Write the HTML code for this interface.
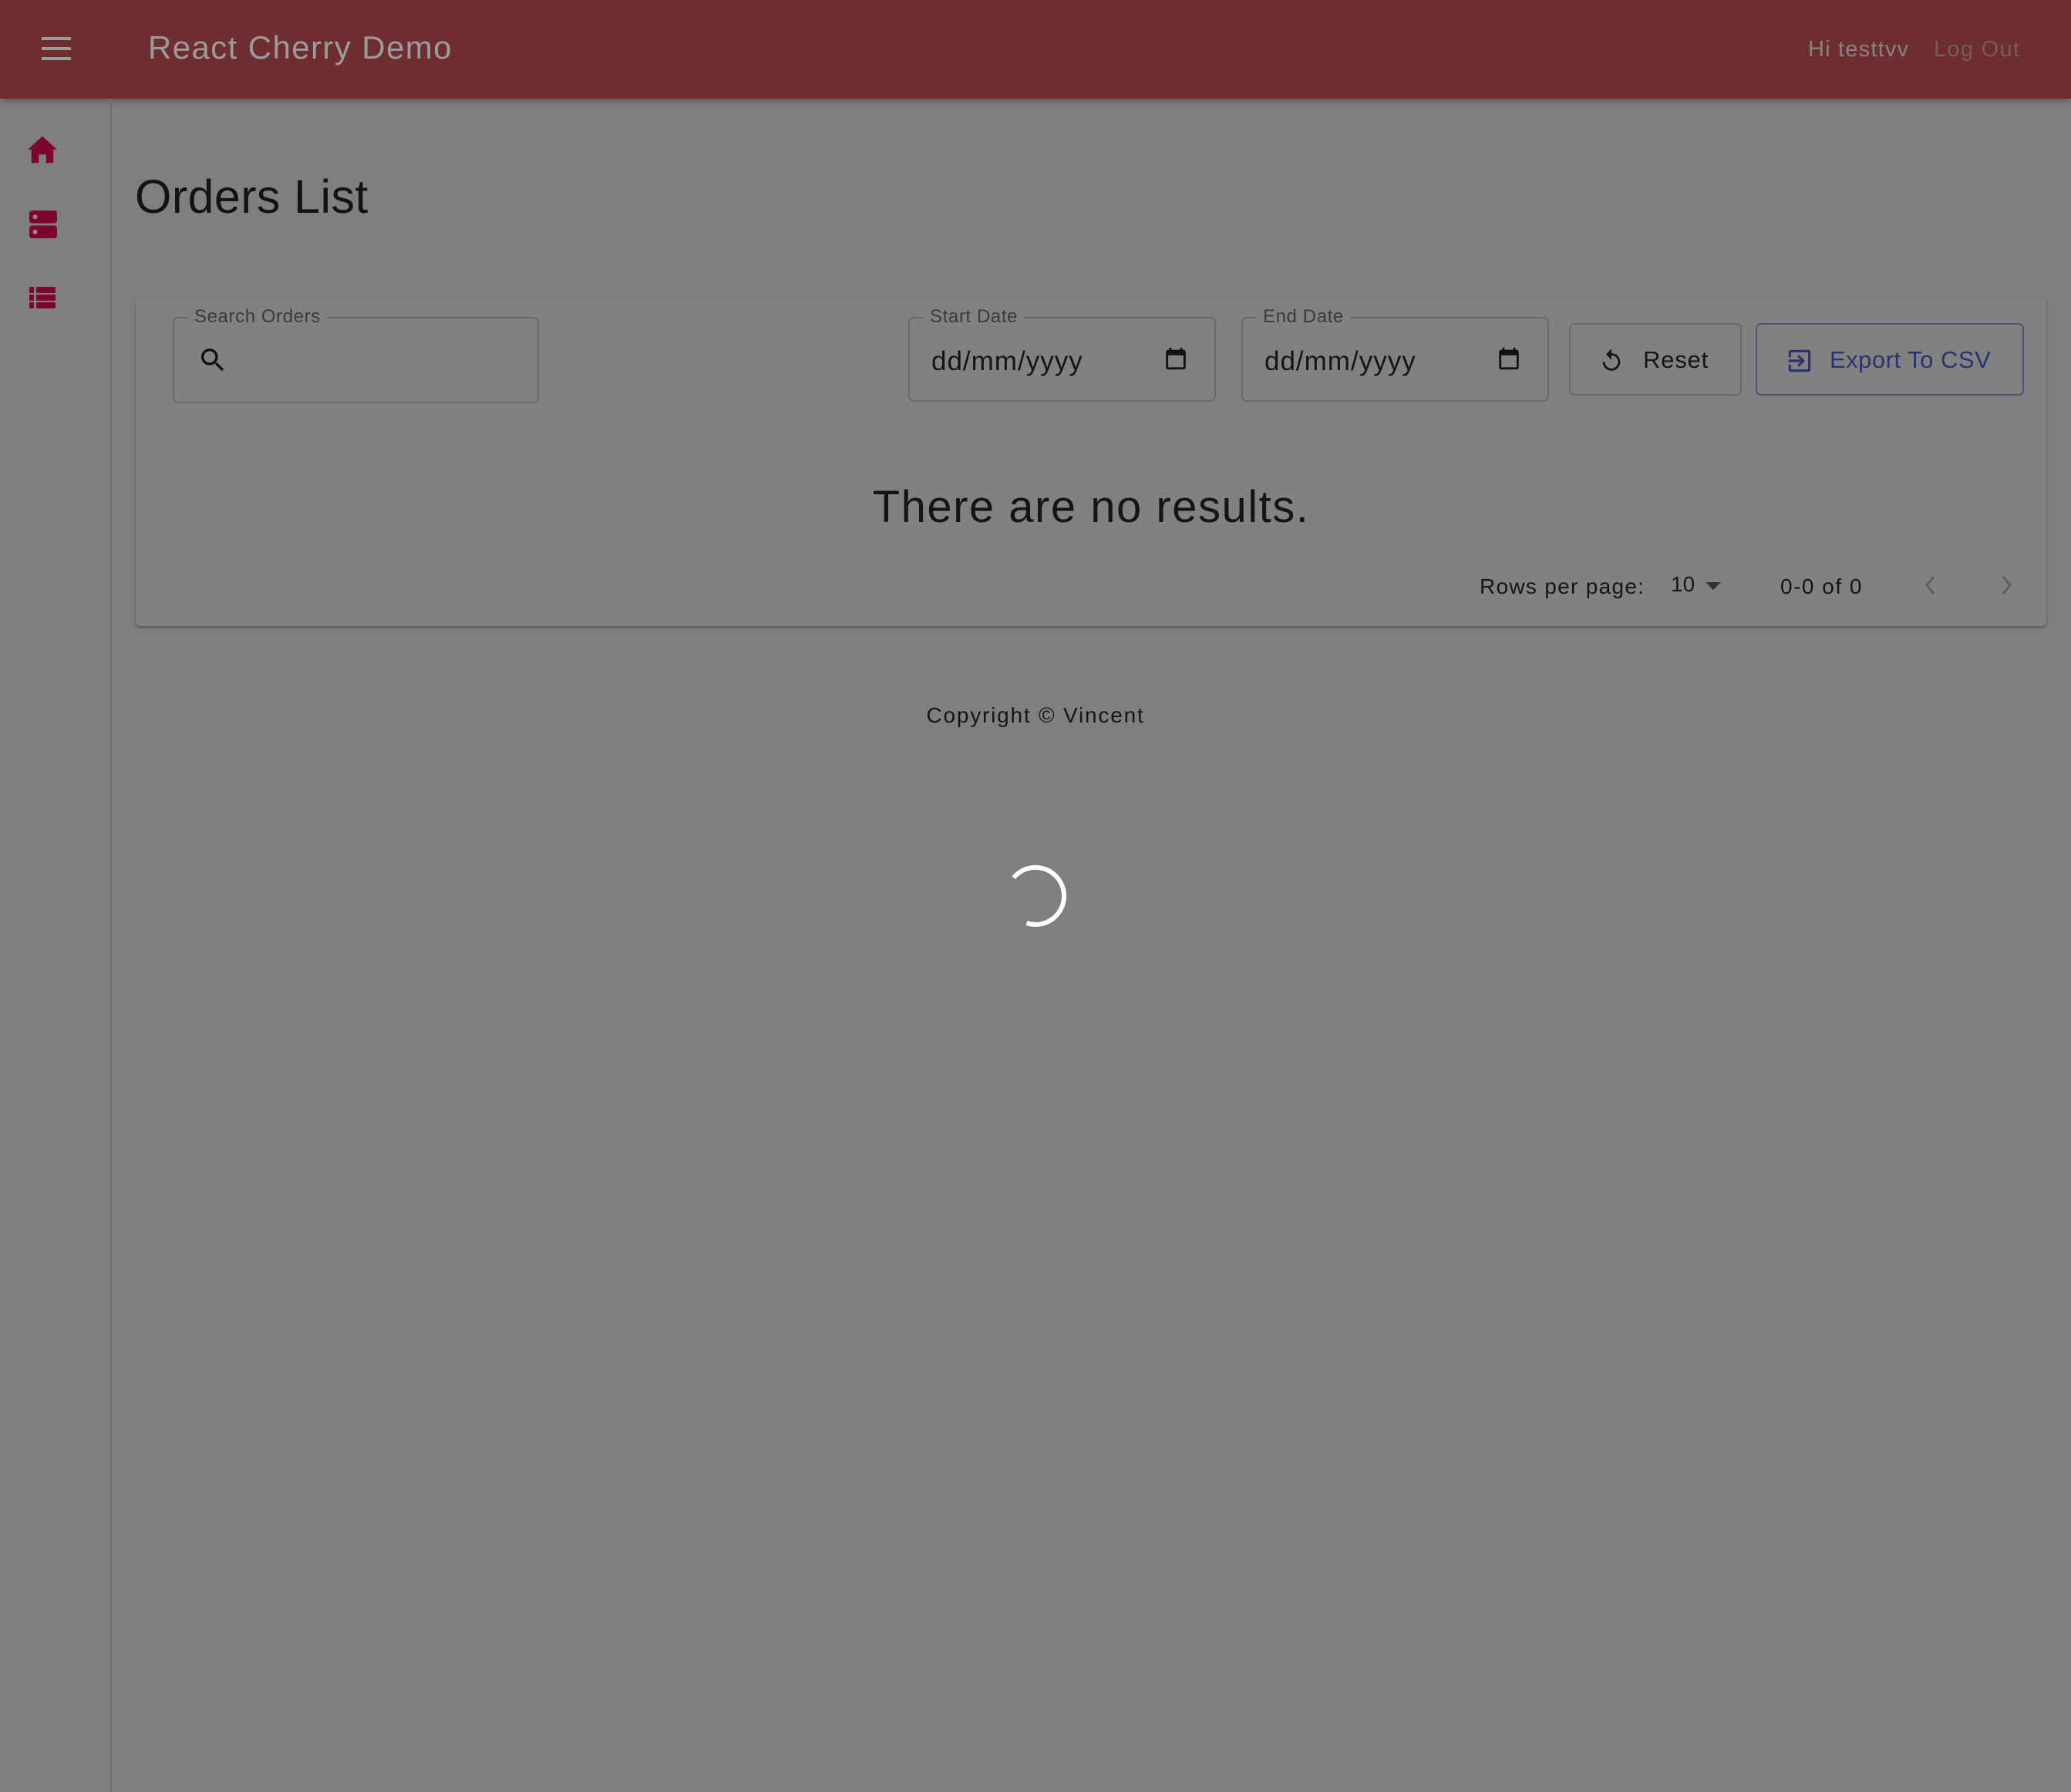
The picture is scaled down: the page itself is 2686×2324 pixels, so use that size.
<!DOCTYPE html>
<html><head><meta charset="utf-8"><style>
*{box-sizing:border-box;margin:0;padding:0}
body{width:2686px;height:2324px;background:#7f7f7f;font-family:"Liberation Sans",sans-serif;position:relative;overflow:hidden}
.abs{position:absolute}
.hdr{left:0;top:0;width:2686px;height:128px;background:#6e2e2f;box-shadow:0 4px 8px rgba(0,0,0,.25)}
.side{left:0;top:128px;width:145px;height:2196px;border-right:2px solid #707070}
.card{left:176px;top:386px;width:2478px;height:426px;background:#818181;border-radius:6px;box-shadow:0 2px 3px rgba(0,0,0,.3)}
.fld{border:2px solid #6a6a6a;border-radius:7px}
.lbl{font-size:24px;color:#3a3a3a;background:#818181;padding:0 8px;top:-16px;left:18px;position:absolute;letter-spacing:.6px}
.dt{font-size:35px;color:#151515;position:absolute;left:28px;top:36px;letter-spacing:1px}
.btn{border:2px solid #6a6a6a;border-radius:7px}
</style></head><body>
<div class="abs hdr"></div>
<svg class="abs" style="left:54px;top:48px" width="38" height="30"><rect y="0" width="38" height="4" fill="#9b9b9b"/><rect y="13" width="38" height="4" fill="#9b9b9b"/><rect y="26" width="38" height="4" fill="#9b9b9b"/></svg>
<div class="abs" style="left:192px;top:38px;font-size:42px;color:#9b9b9b;letter-spacing:1.4px">React Cherry Demo</div>
<div class="abs" style="left:2345px;top:48px;font-size:29px;color:#848484;letter-spacing:1.2px">Hi testtvv</div>
<div class="abs" style="left:2508px;top:48px;font-size:29px;color:#7a5a5a;letter-spacing:1.3px">Log Out</div>
<div class="abs side"></div>
<svg class="abs" style="left:36px;top:176px" width="38" height="36" viewBox="0 0 24 22"><path d="M12 0L0 11h3v11h6v-7h6v7h6V11h3z" fill="#7e0530"/></svg>
<svg class="abs" style="left:38px;top:272px" width="36" height="38" viewBox="0 0 24 24"><rect x="0" y="0" width="24" height="11" rx="2.5" fill="#7e0530"/><rect x="0" y="13" width="24" height="11" rx="2.5" fill="#7e0530"/><circle cx="5" cy="5.5" r="2" fill="#8a8a8a"/><circle cx="5" cy="18.5" r="2" fill="#8a8a8a"/></svg>
<svg class="abs" style="left:38px;top:372px" width="34" height="28" viewBox="0 0 34 28"><g fill="#7e0530"><rect x="0" y="0" width="6" height="8" rx="1"/><rect x="9" y="0" width="25" height="8" rx="1.5"/><rect x="0" y="10" width="6" height="8" rx="1"/><rect x="9" y="10" width="25" height="8" rx="1.5"/><rect x="0" y="20" width="6" height="8" rx="1"/><rect x="9" y="20" width="25" height="8" rx="1.5"/></g></svg>
<div class="abs" style="left:175px;top:220px;font-size:61px;color:#131313;letter-spacing:.4px">Orders List</div>
<div class="abs card"></div>
<div class="abs fld" style="left:224px;top:411px;width:475px;height:112px"><span class="lbl">Search Orders</span>
<svg class="abs" style="left:30px;top:34px" width="40" height="40" viewBox="0 0 24 24"><path d="M15.5 14h-.79l-.28-.27A6.47 6.47 0 0 0 16 9.5 6.5 6.5 0 1 0 9.5 16c1.61 0 3.09-.59 4.23-1.57l.27.28v.79l5 4.99L20.49 19zm-6 0C7.01 14 5 11.99 5 9.5S7.01 5 9.5 5 14 7.01 14 9.5 11.99 14 9.5 14z" fill="#111"/></svg></div>
<div class="abs fld" style="left:1178px;top:411px;width:399px;height:110px"><span class="lbl">Start Date</span><span class="dt">dd/mm/yyyy</span>
<svg class="abs" style="left:328px;top:34px" width="34" height="36" viewBox="0 0 24 24"><path d="M19 4h-1V2h-2v2H8V2H6v2H5a2 2 0 0 0-2 2v14a2 2 0 0 0 2 2h14a2 2 0 0 0 2-2V6a2 2 0 0 0-2-2zm0 16H5V9h14z" fill="#111"/></svg></div>
<div class="abs fld" style="left:1610px;top:411px;width:399px;height:110px"><span class="lbl">End Date</span><span class="dt">dd/mm/yyyy</span>
<svg class="abs" style="left:328px;top:34px" width="34" height="36" viewBox="0 0 24 24"><path d="M19 4h-1V2h-2v2H8V2H6v2H5a2 2 0 0 0-2 2v14a2 2 0 0 0 2 2h14a2 2 0 0 0 2-2V6a2 2 0 0 0-2-2zm0 16H5V9h14z" fill="#111"/></svg></div>
<div class="abs btn" style="left:2035px;top:419px;width:224px;height:94px">
<svg class="abs" style="left:36px;top:28px" width="34" height="38" viewBox="0 0 24 24"><path d="M12 5V1L7 6l5 5V7c3.31 0 6 2.69 6 6s-2.69 6-6 6-6-2.69-6-6H4c0 4.42 3.58 8 8 8s8-3.58 8-8-3.58-8-8-8z" fill="#151515"/></svg>
<span class="abs" style="left:94px;top:28px;font-size:31px;color:#151515;letter-spacing:.8px">Reset</span></div>
<div class="abs btn" style="left:2277px;top:419px;width:348px;height:94px;border-color:#4e5478">
<svg class="abs" style="left:36px;top:28px" width="38" height="38" viewBox="0 0 24 24"><path d="M10.09 15.59 11.5 17l5-5-5-5-1.41 1.41L12.67 11H3v2h9.67zM19 3H5a2 2 0 0 0-2 2v4h2V5h14v14H5v-4H3v4a2 2 0 0 0 2 2h14c1.1 0 2-.9 2-2V5c0-1.1-.9-2-2-2z" fill="#2a3270"/></svg>
<span class="abs" style="left:94px;top:28px;font-size:31px;color:#2a3270;letter-spacing:.5px">Export To CSV</span></div>
<div class="abs" style="left:176px;width:2478px;top:624px;text-align:center;font-size:58px;color:#151515;letter-spacing:1.5px">There are no results.</div>
<div class="abs" style="left:1919px;top:745px;font-size:28px;color:#151515;letter-spacing:1.3px">Rows per page:</div>
<div class="abs" style="left:2167px;top:742px;font-size:28px;color:#151515">10</div>
<svg class="abs" style="left:2212px;top:755px" width="20" height="10"><path d="M0 0h20L10 10z" fill="#333"/></svg>
<div class="abs" style="left:2309px;top:745px;font-size:28px;color:#151515;letter-spacing:1.5px">0-0 of 0</div>
<svg class="abs" style="left:2494px;top:744px" width="20" height="30" viewBox="0 0 20 30"><path d="M14 4 5 15l9 11" stroke="#5e5e5e" stroke-width="3" fill="none"/></svg>
<svg class="abs" style="left:2592px;top:744px" width="20" height="30" viewBox="0 0 20 30"><path d="M6 4l9 11-9 11" stroke="#5e5e5e" stroke-width="3" fill="none"/></svg>
<div class="abs" style="left:0;width:2686px;top:912px;text-align:center;font-size:28px;color:#151515;letter-spacing:1.8px">Copyright © Vincent</div>
<svg class="abs" style="left:1295px;top:1114px" width="96" height="96" viewBox="0 0 96 96"><circle cx="48" cy="48" r="37" stroke="#fff" stroke-width="6" fill="none" stroke-dasharray="160 400" transform="rotate(-140 48 48)"/></svg>
</body></html>
